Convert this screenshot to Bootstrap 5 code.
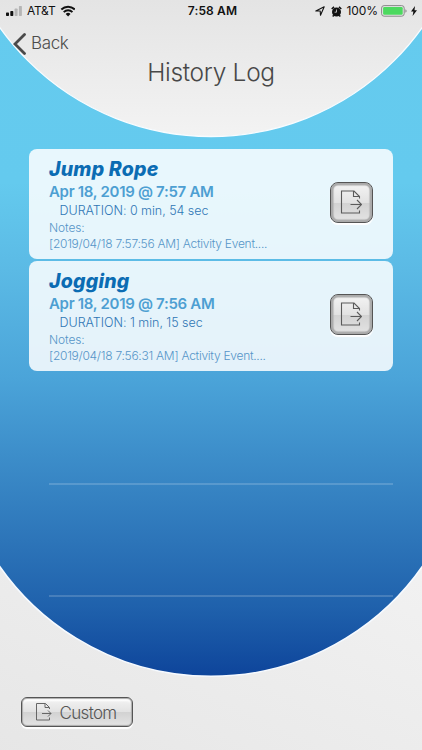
<!DOCTYPE html>
<html lang="en">
<head>
<meta charset="utf-8">
<meta name="viewport" content="width=device-width, initial-scale=1">
<title>History Log</title>
<link href="https://cdn.jsdelivr.net/npm/bootstrap@5.3.0/dist/css/bootstrap.min.css" rel="stylesheet">
<style>
body{font-family:Inter,"Liberation Sans",sans-serif;height:750px;width:422px;overflow:hidden;background:#65cbee;color:#4a4a4a}
.backdrop{position:absolute;inset:0;z-index:-1}
.status{height:22px;font-size:12px;line-height:22px;color:#111}
.status svg,.back svg,.tile svg,.custom svg{display:block;flex:none}
.status .carrier{margin:0 0 0 5px;flex:1 1 0;letter-spacing:-.25px}
.status .power{flex:1 1 0;padding-right:5px}
.status .clock{font-weight:600;letter-spacing:.15px;margin-left:3px}
.status .alarm{margin-left:6px}
.status .percent{margin-left:5px;letter-spacing:-.1px}
.status .battery{margin:0 4px 0 3px}
.back{height:43px;padding-left:12px;font-size:17px;font-weight:300;color:#4c4c4c;letter-spacing:-.35px}
.screen-title{font-size:24.5px;font-weight:300;line-height:30px;margin:-8px 0 0;letter-spacing:-.3px;color:#484848}
.log{margin:62px 29px 0}
.entry{height:112px;border-bottom:2px solid #ffffff2b}
.entry.filled{border-bottom:0;padding-bottom:2px}
.entry.void{margin-left:20px}
.panel{height:110px;border-radius:8px;background:#ffffffd9;padding:9px 20px 0}
.activity{font-size:19.5px;line-height:23px;font-weight:800;font-style:italic;color:#0b6cb3;letter-spacing:.22px}
.when{font-size:15px;line-height:21px;font-weight:600;color:#4d9fd2;letter-spacing:-.3px}
.length{font-size:12.5px;line-height:18px;font-weight:300;color:#2f76b5;padding-left:10.500px;letter-spacing:-.03px}
.notes{font-size:12px;line-height:16px;font-weight:300;color:#5695c8;letter-spacing:-.1px}
.memo{letter-spacing:-.27px}
.tile,.custom{border:1.5px solid #555;background:linear-gradient(#f4f4f4,#e2e2e2 50%,#d2d2d2 51%,#e4e4e4)}
.tile{width:43px;height:41px;border-radius:8px;margin-top:23.500px;box-shadow:0 2px 1px #fff,inset 0 0 1px 2.5px #aaa}
.tile svg{margin-left:-2px;margin-top:-1px}
.custom{position:absolute;left:20.500px;top:696.500px;width:112px;height:30.500px;border-radius:6px;padding:0 0 0 13px;font-size:17px;font-weight:300;color:#555;letter-spacing:-.67px;box-shadow:0 1.5px 1px #fff,inset 0 0 1px 1px #aaa,inset 0 3px 2px #fff}
.custom span{padding-top:4px}
</style>
<script src="https://cdn.jsdelivr.net/npm/bootstrap@5.3.0/dist/js/bootstrap.bundle.min.js"></script>
</head>
<body class="position-relative m-0">
<svg class="backdrop" width="422" height="750" viewBox="0 0 422 750" aria-hidden="true">
  <defs>
    <linearGradient id="sea" x1="0" y1="0" x2="0" y2="675" gradientUnits="userSpaceOnUse">
      <stop offset="0" stop-color="#65cbee"/><stop offset=".27" stop-color="#64caee"/><stop offset=".4" stop-color="#5bbae5"/><stop offset=".56" stop-color="#4ba4d9"/><stop offset=".8" stop-color="#2d75b9"/><stop offset=".9" stop-color="#1f61ac"/><stop offset="1" stop-color="#0e459b"/>
    </linearGradient>
    <linearGradient id="cap" x1="0" y1="0" x2="0" y2="137" gradientUnits="userSpaceOnUse"><stop stop-color="#e4e4e4"/><stop offset="1" stop-color="#f3f3f3"/></linearGradient>
    <linearGradient id="base" x1="0" y1="1" x2="1" y2="0"><stop stop-color="#e6e6e6"/><stop offset="1" stop-color="#f2f2f2"/></linearGradient>
  </defs>
  <rect width="422" height="750" fill="url(#sea)"/>
  <circle cx="211" cy="-122.5" r="259" fill="url(#cap)" stroke="#f8fcff" stroke-width="1.3"/>
  <path d="M-10 551.500A258 258 0 0 0 432 551.500V760H-10Z" fill="url(#base)" stroke="#f6faff" stroke-width="1.5"/>
</svg>

<header>
  <div class="status d-flex align-items-center">
    <div class="carrier d-flex align-items-center">
      <svg width="18" height="12" viewBox="0 0 18 12"><rect x="1" y="7.5" width="3" height="3.5" rx=".7" fill="#111"/><rect x="5.3" y="6" width="3" height="5" rx=".7" fill="#111"/><rect x="9.6" y="3.5" width="3" height="7.5" rx=".7" fill="#b5b5b5"/><rect x="13.9" y="1" width="3" height="10" rx=".7" fill="#b5b5b5"/></svg>
      <span class="ms-1">AT&amp;T</span>
      <svg class="ms-1 me-2" width="16" height="12" viewBox="-1 0 14 11" fill="none" stroke="#111" stroke-width="1.8"><path d="M.8 4.1a8.800 8.800 0 0 1 12.400 0M3 6.500a5.700 5.700 0 0 1 8 0"/><path d="M4.800 8.200a3.100 3.100 0 0 1 4.400 0L7 10.500Z" fill="#111" stroke="none"/></svg>
    </div>
    <span class="clock">7:58 AM</span>
    <div class="power d-flex align-items-center justify-content-end">
      <svg width="10" height="10" viewBox="0 0 10 10"><path d="M.8 5 9.200.8 5.500 9.300 5.200 5Z" fill="none" stroke="#111" stroke-width="1.1" stroke-linejoin="round"/></svg>
      <svg class="alarm" width="11" height="11" viewBox="0 0 11 11"><circle cx="5.5" cy="6" r="4.500" fill="#111"/><path d="M.7 3 3 .9M10.300 3 8 .9M2.800 9.200 1.700 10.500M8.200 9.200 9.300 10.500" stroke="#111" stroke-width="1.500"/><path d="M5.500 3.500V6.200H3.600" fill="none" stroke="#ddd" stroke-width=".8"/></svg>
      <span class="percent">100%</span>
      <svg class="battery" width="26" height="12" viewBox="0 0 26 12"><rect x=".6" y=".6" width="22.600" height="10.600" rx="2.500" fill="none" stroke="#888"/><rect x="2.100" y="2.100" width="19.600" height="7.600" rx="1.200" fill="#4cd95f"/><path d="M24.400 4.200v3.600q1.200-.6 1.200-1.800t-1.200-1.800Z" fill="#888"/></svg>
      <svg width="6" height="10" viewBox="0 0 6 10"><path d="M4 0 0 5.600h2.400L1.600 10 6 4.200H3.500Z" fill="#111"/></svg>
    </div>
  </div>
  <a class="back d-flex align-items-center text-decoration-none" href="#">
    <svg width="15" height="22" viewBox="0 0 15 22"><path d="M12.500 1.500 3 11l9.500 9.500" fill="none" stroke="#4a4a4a" stroke-width="2.800" stroke-linecap="round"/></svg>
    <span class="ms-1">Back</span>
  </a>
  <h1 class="screen-title text-center">History Log</h1>
</header>

<main class="log">
  <article class="entry filled">
    <div class="panel d-flex justify-content-between align-items-start">
      <div><div class="activity">Jump Rope</div><div class="when">Apr 18, 2019 @ 7:57 AM</div><div class="length">DURATION: 0 min, 54 sec</div><div class="notes">Notes:<br><span class="memo">[2019/04/18 7:57:56 AM] Activity Event....</span></div></div>
      <button class="tile d-flex align-items-center justify-content-center p-0" aria-label="Export"><svg width="22" height="24" viewBox="0 0 22 24" fill="none" stroke="#5a5a5a" stroke-width="1.100"><path d="M19.500 8.500V6.500L14 1H1.500V23H19.500V20.500M13.500 1V6.500H19M10.500 14.500H21.500M17 10 21.500 14.500 17 19"/></svg></button>
    </div>
  </article>
  <article class="entry filled">
    <div class="panel d-flex justify-content-between align-items-start">
      <div><div class="activity">Jogging</div><div class="when">Apr 18, 2019 @ 7:56 AM</div><div class="length">DURATION: 1 min, 15 sec</div><div class="notes">Notes:<br><span class="memo">[2019/04/18 7:56:31 AM] Activity Event....</span></div></div>
      <button class="tile d-flex align-items-center justify-content-center p-0" aria-label="Export"><svg width="22" height="24" viewBox="0 0 22 24" fill="none" stroke="#5a5a5a" stroke-width="1.100"><path d="M19.500 8.500V6.500L14 1H1.500V23H19.500V20.500M13.500 1V6.500H19M10.500 14.500H21.500M17 10 21.500 14.500 17 19"/></svg></button>
    </div>
  </article>
  <div class="entry void"></div>
  <div class="entry void"></div>
</main>

<button class="custom d-flex align-items-center">
  <svg width="17" height="19" viewBox="0 0 17 19" fill="none" stroke="#666"><path d="M14.500 7V5.500L10.500 1.500H1.500V18H14.500V15.500M10 1.500V5.500H14M7 11.500H16M13 8.500 16 11.500 13 14.500"/></svg>
  <span class="ms-2">Custom</span>
</button>
</body>
</html>
